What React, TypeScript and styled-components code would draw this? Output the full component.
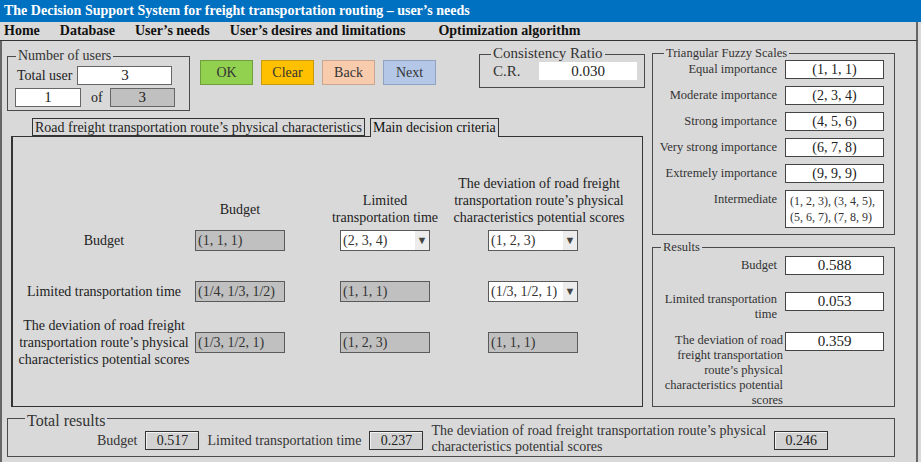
import styled, { createGlobalStyle } from "styled-components";

const BG = "#d9d9d9";
const LINE = "#4a4a4a";

const GlobalStyle = createGlobalStyle`
  html, body {
    margin: 0;
    padding: 0;
    background: ${BG};
  }
  body {
    font-family: "Liberation Serif", "Times New Roman", serif;
    color: #222;
  }
  * {
    box-sizing: border-box;
  }
`;

const pairs = [
  ["Equal importance", "(1, 1, 1)"],
  ["Moderate importance", "(2, 3, 4)"],
  ["Strong importance", "(4, 5, 6)"],
  ["Very strong importance", "(6, 7, 8)"],
  ["Extremely importance", "(9, 9, 9)"],
];

type CellData = { value: string; select?: boolean };

const matrix: { label: string[]; cells: CellData[] }[] = [
  {
    label: ["Budget"],
    cells: [
      { value: "(1, 1, 1)" },
      { value: "(2, 3, 4)", select: true },
      { value: "(1, 2, 3)", select: true },
    ],
  },
  {
    label: ["Limited transportation time"],
    cells: [
      { value: "(1/4, 1/3, 1/2)" },
      { value: "(1, 1, 1)" },
      { value: "(1/3, 1/2, 1)", select: true },
    ],
  },
  {
    label: [
      "The deviation of road freight",
      "transportation route\u2019s physical",
      "characteristics potential scores",
    ],
    cells: [{ value: "(1/3, 1/2, 1)" }, { value: "(1, 2, 3)" }, { value: "(1, 1, 1)" }],
  },
];

export default function App() {
  return (
    <Window>
      <GlobalStyle />
      <TitleBar>
        The Decision Support System for freight transportation routing – user’s needs
      </TitleBar>
      <MenuBar>
        <MenuItem>Home</MenuItem>
        <MenuItem>Database</MenuItem>
        <MenuItem>User’s needs</MenuItem>
        <MenuItem>User’s desires and limitations</MenuItem>
        <MenuItem $extra={13}>Optimization algorithm</MenuItem>
      </MenuBar>
      <Body>
        <LeftCol>
          <TopRow>
            <Group $w={183} $h={55} $top={2} $pad="9px 0 0 7px">
              <Legend $left={8} $size={14}>Number of users</Legend>
              <UserRow>
                <SmallLabel style={{ marginLeft: 2 }}>Total user</SmallLabel>
                <Field $w={95}>3</Field>
              </UserRow>
              <UserRow>
                <Field $w={66}>1</Field>
                <SmallLabel style={{ margin: "0 7px 0 10px" }}>of</SmallLabel>
                <Field $w={65} $gray>3</Field>
              </UserRow>
            </Group>
            <ButtonRow>
              <Btn $bg="#92d050" $edge="#6f9e3c">OK</Btn>
              <Btn $bg="#ffc000" $edge="#c99a10">Clear</Btn>
              <Btn $bg="#f8cbad" $edge="#c9a690">Back</Btn>
              <Btn $bg="#b4c7e7" $edge="#8fa2c4">Next</Btn>
            </ButtonRow>
            <Group $w={166} $h={34} $pad="7px 0 0 13px" style={{ marginLeft: "auto" }}>
              <Legend $left={11} $size={15}>Consistency Ratio</Legend>
              <UserRow>
                <CrLabel>C.R.</CrLabel>
                <CrField>0.030</CrField>
              </UserRow>
            </Group>
          </TopRow>
          <TabStrip>
            <Tab>Road freight transportation route’s physical characteristics</Tab>
            <Tab $active>Main decision criteria</Tab>
          </TabStrip>
          <Panel>
            <HeaderRow>
              <span />
              <ColHeader $lift={8}>
                <span>Budget</span>
              </ColHeader>
              <ColHeader>
                <span>Limited</span>
                <span>transportation time</span>
              </ColHeader>
              <ColHeader $shift={6}>
                <span>The deviation of road freight</span>
                <span>transportation route’s physical</span>
                <span>characteristics potential scores</span>
              </ColHeader>
            </HeaderRow>
            <Matrix>
              {matrix.map((row, i) => [
                <RowLabel key={`l${i}`}>
                  {row.label.map((l) => (
                    <span key={l}>{l}</span>
                  ))}
                </RowLabel>,
                ...row.cells.map((c, j) => (
                  <Cell key={`c${i}${j}`} $white={!!c.select}>
                    <span>{c.value}</span>
                    {c.select && <Arrow>▼</Arrow>}
                  </Cell>
                )),
              ])}
            </Matrix>
          </Panel>
        </LeftCol>

        <RightCol>
          <Group $w={243} $h={182} $top={12} $pad="6px 10px 0 0">
            <Legend $left={11} $size={12.5}>Triangular Fuzzy Scales</Legend>
            <ScaleGrid>
              {pairs.map(([label, value]) => [
                <ScaleLabel key={label}>{label}</ScaleLabel>,
                <ScaleValue key={value}>{value}</ScaleValue>,
              ])}
              <ScaleLabel>Intermediate</ScaleLabel>
              <IntermediateValue>
                (1, 2, 3), (3, 4, 5),
                <br />
                (5, 6, 7), (7, 8, 9)
              </IntermediateValue>
            </ScaleGrid>
          </Group>
          <Group $w={243} $h={160} $top={12} $pad="8px 10px 0 0">
            <Legend $left={8} $size={12.5}>Results</Legend>
            <ResultGrid>
              <ResultLabel $single>Budget</ResultLabel>
              <ResultValue>0.588</ResultValue>
              <ResultLabel>
                Limited transportation
                <br />
                time
              </ResultLabel>
              <ResultValue>0.053</ResultValue>
              <ResultLabel $wide>
                The deviation of road
                <br />
                freight transportation
                <br />
                route’s physical
                <br />
                characteristics potential
                <br />
                scores
              </ResultLabel>
              <ResultValue>0.359</ResultValue>
            </ResultGrid>
          </Group>
        </RightCol>

        <TotalGroup>
          <Legend $left={17} $size={16} $offset={-6}>
            Total results
          </Legend>
          <TotalRow>
            <TotalLabel>Budget</TotalLabel>
            <TotalValue>0.517</TotalValue>
            <TotalLabel>Limited transportation time</TotalLabel>
            <TotalValue>0.237</TotalValue>
            <TotalLabel $lines>
              The deviation of road freight transportation route’s physical
              <br />
              characteristics potential scores
            </TotalLabel>
            <TotalValue>0.246</TotalValue>
          </TotalRow>
        </TotalGroup>
      </Body>
    </Window>
  );
}

const Window = styled.div`
  width: 921px;
  height: 462px;
  overflow: hidden;
  background: ${BG};
`;
const TitleBar = styled.div`
  height: 22px;
  line-height: 22px;
  padding-left: 4px;
  background: #0070c0;
  color: #fff;
  font-weight: 700;
  font-size: 14px;
  white-space: nowrap;
`;
const MenuBar = styled.div`
  display: flex;
  align-items: center;
  gap: 20px;
  height: 19px;
  width: 918px;
  padding-left: 4px;
  border-bottom: 1px solid #333;
  border-right: 2px solid #666;
  font-weight: 700;
  font-size: 14px;
  color: #111;
`;
const MenuItem = styled.span<{ $extra?: number }>`
  white-space: nowrap;
  margin-left: ${(p) => p.$extra ?? 0}px;
`;
const Body = styled.div`
  display: grid;
  grid-template-columns: 638px 243px;
  grid-template-rows: 366px auto;
  column-gap: 7px;
  width: 918px;
  height: 421px;
  padding-left: 5px;
  border-left: 2px solid #666;
  border-right: 2px solid #666;
`;
const LeftCol = styled.div`
  display: flex;
  flex-direction: column;
`;
const RightCol = styled.div`
  display: flex;
  flex-direction: column;
`;
const TopRow = styled.div`
  display: flex;
  align-items: flex-start;
  height: 77px;
  padding-top: 13px;
`;
const Group = styled.div<{ $w: number; $h: number; $top?: number; $pad?: string }>`
  position: relative;
  width: ${(p) => p.$w}px;
  height: ${(p) => p.$h}px;
  margin-top: ${(p) => p.$top ?? 0}px;
  padding: ${(p) => p.$pad ?? "0"};
  border: 1px solid ${LINE};
  flex-shrink: 0;
`;
const Legend = styled.span<{ $left: number; $size: number; $offset?: number }>`
  position: absolute;
  top: ${(p) => p.$offset ?? -Math.round(p.$size / 2) - 1}px;
  left: ${(p) => p.$left}px;
  padding: 0 2px;
  background: ${BG};
  font-size: ${(p) => p.$size}px;
  line-height: 1;
  color: #333;
  white-space: nowrap;
`;
const UserRow = styled.div`
  display: flex;
  align-items: center;
  margin-bottom: 3px;
`;
const SmallLabel = styled.span`
  font-size: 14px;
  margin-right: 5px;
  white-space: nowrap;
`;
const Field = styled.div<{ $w: number; $gray?: boolean }>`
  width: ${(p) => p.$w}px;
  height: 19px;
  line-height: 17px;
  text-align: center;
  font-size: 15px;
  background: ${(p) => (p.$gray ? "#c0c0c0" : "#fff")};
  border: 1px solid #666;
`;
const ButtonRow = styled.div`
  display: flex;
  gap: 8px;
  margin: 6px 0 0 10px;
`;
const Btn = styled.button<{ $bg: string; $edge: string }>`
  width: 53px;
  height: 25px;
  padding: 0;
  background: ${(p) => p.$bg};
  border: 1px solid ${(p) => p.$edge};
  font-family: "Liberation Serif", "Times New Roman", serif;
  font-size: 14px;
  color: #333;
`;
const CrLabel = styled.span`
  width: 46px;
  font-size: 15px;
  color: #333;
`;
const CrField = styled.div`
  width: 98px;
  height: 18px;
  line-height: 18px;
  background: #fff;
  text-align: center;
  font-size: 15px;
`;
const TabStrip = styled.div`
  position: relative;
  z-index: 1;
  display: flex;
  gap: 5px;
  height: 19px;
  padding-left: 25px;
`;
const Tab = styled.div<{ $active?: boolean }>`
  height: ${(p) => (p.$active ? 19 : 18)}px;
  padding: 0 2px;
  line-height: 17px;
  font-size: 14px;
  white-space: nowrap;
  background: ${BG};
  border: 1px solid #333;
  border-bottom: ${(p) => (p.$active ? "none" : "1px solid #333")};
  color: ${(p) => (p.$active ? "#111" : "#222")};
`;
const Panel = styled.div`
  width: 632px;
  height: 271px;
  margin: -1px 0 0 4px;
  padding-left: 8px;
  border: 1px solid #333;
  border-left-width: 2px;
`;
const matrixColumns = "174px 145px 148px 90px";
const HeaderRow = styled.div`
  display: grid;
  grid-template-columns: ${matrixColumns};
  align-items: end;
  height: 89px;
`;
const ColHeader = styled.div<{ $shift?: number; $lift?: number }>`
  display: flex;
  flex-direction: column;
  align-items: center;
  width: 90px;
  margin-left: ${(p) => p.$shift ?? 0}px;
  margin-bottom: ${(p) => p.$lift ?? 0}px;
  font-size: 14px;
  line-height: 17px;
  color: #222;
  & > span {
    white-space: nowrap;
  }
`;
const Matrix = styled.div`
  display: grid;
  grid-template-columns: ${matrixColumns};
  grid-template-rows: repeat(3, 21px);
  row-gap: 30px;
  align-items: center;
  margin-top: 4px;
`;
const RowLabel = styled.div`
  display: flex;
  flex-direction: column;
  align-items: center;
  padding-right: 8px;
  font-size: 14px;
  line-height: 17px;
  & > span {
    white-space: nowrap;
  }
`;
const Cell = styled.div<{ $white: boolean }>`
  display: flex;
  justify-content: space-between;
  width: 90px;
  height: 21px;
  padding-left: 2px;
  line-height: 19px;
  font-size: 14px;
  white-space: nowrap;
  background: ${(p) => (p.$white ? "#fff" : "#c0c0c0")};
  border: 1px solid #5a5a5a;
  color: #333;
`;
const Arrow = styled.span`
  width: 14px;
  background: #ececec;
  font-size: 11px;
  text-align: center;
  color: #444;
`;
const ScaleGrid = styled.div`
  display: grid;
  grid-template-columns: 1fr 99px;
  grid-template-rows: repeat(5, 19px) 38px;
  column-gap: 8px;
  row-gap: 7px;
`;
const ScaleLabel = styled.span`
  text-align: right;
  font-size: 12.5px;
  line-height: 19px;
  white-space: nowrap;
  color: #333;
`;
const ScaleValue = styled.div`
  background: #fff;
  border: 1px solid #444;
  text-align: center;
  font-size: 14px;
  line-height: 17px;
`;
const IntermediateValue = styled.div`
  background: #fff;
  border: 1px solid #444;
  padding: 2px 0 0 4px;
  font-size: 12px;
  line-height: 16px;
  white-space: nowrap;
  color: #333;
`;
const ResultGrid = styled.div`
  display: grid;
  grid-template-columns: 1fr 99px;
  grid-template-rows: 36px 40px auto;
  column-gap: 8px;
  align-items: start;
`;
const ResultLabel = styled.span<{ $single?: boolean; $wide?: boolean }>`
  text-align: right;
  font-size: 12.5px;
  line-height: ${(p) => (p.$single ? 18 : 15)}px;
  margin-right: ${(p) => (p.$wide ? -6 : 0)}px;
  padding-top: ${(p) => (p.$wide ? 1 : 0)}px;
  white-space: nowrap;
  color: #333;
`;
const ResultValue = styled.div`
  height: 19px;
  background: #fff;
  border: 1px solid #444;
  text-align: center;
  font-size: 15px;
  line-height: 17px;
`;
const TotalGroup = styled.div`
  position: relative;
  grid-column: 1 / -1;
  width: 888px;
  height: 39px;
  margin-top: 11px;
  border: 1px solid ${LINE};
`;
const TotalRow = styled.div`
  display: flex;
  align-items: center;
  gap: 8px;
  height: 100%;
  padding: 5px 0 0 89px;
`;
const TotalLabel = styled.span<{ $lines?: boolean }>`
  font-size: 14px;
  line-height: ${(p) => (p.$lines ? 16 : 19)}px;
  white-space: nowrap;
  margin-top: ${(p) => (p.$lines ? -3 : 0)}px;
  color: #333;
`;
const TotalValue = styled.div`
  width: 54px;
  height: 19px;
  background: #d2d2d2;
  border: 1px solid #333;
  box-shadow: inset 1px 1px 0 #f2f2f2;
  text-align: center;
  font-size: 14px;
  line-height: 17px;
`;
